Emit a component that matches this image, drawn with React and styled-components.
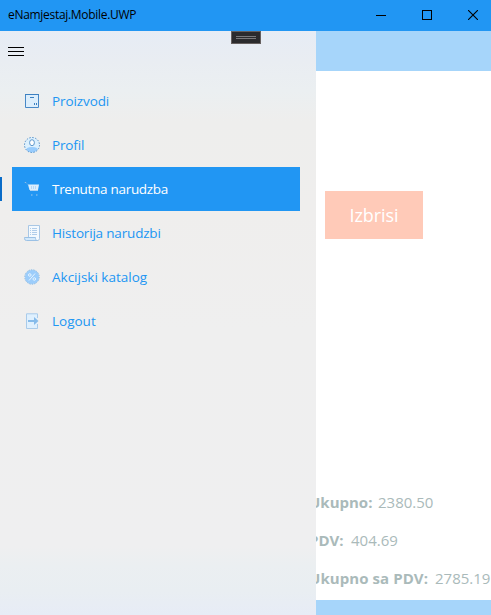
import React from "react";
import styled, { createGlobalStyle } from "styled-components";

const GlobalStyle = createGlobalStyle`
  * { box-sizing: border-box; }
  body { margin: 0; overflow: hidden; background: #fff; font-family: "Open Sans", "Noto Sans", sans-serif; }
`;

const Window = styled.div`
  width: 491px;
  height: 615px;
  display: flex;
  flex-direction: column;
  overflow: hidden;
  background: #fff;
`;

const TitleBar = styled.header`
  flex: 0 0 31px;
  display: flex;
  justify-content: space-between;
  padding-left: 8px;
  background: #2196f3;
  color: #000;
`;

const Title = styled.span`
  font-size: 12px;
  line-height: 29px;
  letter-spacing: -0.3px;
  white-space: nowrap;
`;

const WindowControls = styled.div`
  display: flex;
  margin-right: -5px;
`;

const ControlButton = styled.button`
  width: 46px;
  height: 30px;
  display: flex;
  align-items: center;
  justify-content: center;
  padding: 0;
  border: 0;
  background: transparent;
`;

const Stage = styled.div`
  position: relative;
  flex: 1;
  min-height: 0;
`;

const Page = styled.main`
  height: 100%;
  display: flex;
  flex-direction: column;
  padding-left: 308px;
`;

const Band = styled.div`
  flex: 0 0 ${(p) => p.$height}px;
  margin-left: -308px;
  background: #a6d5fa;
`;

const DeleteButton = styled.button`
  width: 98px;
  height: 48px;
  margin: 120px 0 0 17px;
  padding: 0;
  border: 0;
  background: #ffcab8;
  color: #fff;
  font: 18px/48px "Open Sans", sans-serif;
  letter-spacing: -0.1px;
`;

const Totals = styled.dl`
  margin: auto 0 3px;
  display: flex;
  flex-direction: column;
`;

const TotalRow = styled.div`
  display: flex;
  height: 38px;
  align-items: center;
  margin-left: 1px;
  color: #aababa;
  font-size: 15px;
  white-space: nowrap;
`;

const TotalLabel = styled.dt`
  width: ${(p) => p.$width}px;
  font-weight: 700;
  letter-spacing: ${(p) => p.$track}px;
`;

const TotalValue = styled.dd`
  margin: 0;
`;

const Drawer = styled.nav`
  position: absolute;
  inset: 0 auto 0 0;
  width: 316px;
  background: linear-gradient(180deg, #e6ecf5 0, #e9edf2 30px, #ebeff1 60px, #eeeeed 90px, #efeeed 180px, #efefef 300px, #efeff0 515px, #ebeff1 535px, #e9eef2 560px, #e7ecf6 584px);
`;

const MenuButton = styled.button`
  width: 40px;
  height: 40px;
  display: block;
  padding: 0 0 0 8px;
  border: 0;
  background: transparent;
  svg { display: block; }
`;

const MenuList = styled.ul`
  margin: 8px 0 0;
  padding: 0;
  list-style: none;
`;

const MenuItem = styled.li`
  display: flex;
  align-items: center;
  height: 44px;
  padding-right: 16px;
`;

const Marker = styled.span`
  width: 2px;
  height: 24px;
  margin-right: 10px;
  background: ${(p) => (p.$active ? "#0a6cc8" : "transparent")};
`;

const MenuLink = styled.a`
  flex: 1;
  height: 44px;
  display: flex;
  align-items: center;
  gap: 12px;
  padding-left: 12px;
  background: ${(p) => (p.$active ? "#2196f3" : "transparent")};
  color: ${(p) => (p.$active ? "#fff" : "#2196f3")};
  font-size: 13.5px;
  white-space: nowrap;
  svg { flex: none; }
`;

const MenuLabel = styled.span`
  letter-spacing: ${(p) => p.$track}px;
`;

const DebugHandle = styled.div`
  position: absolute;
  left: 231px;
  top: 0;
  width: 30px;
  height: 13px;
  display: flex;
  flex-direction: column;
  align-items: center;
  justify-content: center;
  gap: 1px;
  border: 1px solid #66605f;
  background: #2b2b2d;
`;

const HandleLine = styled.span`
  width: 20px;
  height: 1px;
  background: #79797b;
`;

const Icon = ({ children }) => (
  <svg width="16" height="16" viewBox="0 0 16 16" fill="none">{children}</svg>
);

const BoxIcon = () => (
  <Icon>
    <path d="M1.500 1.500h13v13h-13z" fill="#dceefc" stroke="#4788c7" />
    <path d="M1 1.500h14" stroke="#3c80c1" />
    <path d="M6 4.500h4M10.500 10v2M12.500 10v2" stroke="#3c80c1" />
  </Icon>
);

const ProfileIcon = () => (
  <Icon>
    <circle cx="8" cy="8" r="7.5" fill="#dcf0fe" />
    <path d="M2.400 12.800C2.200 10.800 4 10 8 10s5.800.8 5.600 2.800A7.500 7.500 0 0 1 8 15.500a7.500 7.500 0 0 1-5.600-2.700z" fill="#98ccfd" />
    <ellipse cx="8" cy="5.700" rx="2.400" ry="3" fill="#fff" stroke="#5d97cc" />
    <circle cx="8" cy="8" r="7.5" stroke="#5590c8" strokeDasharray="1.5 1.445" />
  </Icon>
);

const CartIcon = () => (
  <Icon>
    <path d="M.8 1.500h1.400" stroke="#90bde5" />
    <path d="M2.500 2.500l1.500 1" stroke="#55a7ec" />
    <path d="M4 3.500h11l-1 5.500H5.500z" fill="#dceefc" />
    <path d="M7.500 5v3M9.500 5v3M11.500 5v3" stroke="#b3d8f8" />
    <path d="M6 9.500h8" stroke="#a9d3f7" />
    <path d="M7 14h1.500M12 14h1.500" stroke="#a5cbec" />
  </Icon>
);

const HistoryIcon = () => (
  <Icon>
    <path d="M4.500.5h11v13a2 2 0 0 1-2 2h-9z" fill="#f3f9fe" stroke="#a9c7e5" />
    <path d="M.5 12.500h11v1c0 1 .6 2 2 2h-11a2 2 0 0 1-2-2z" fill="#d3e9fb" stroke="#9bc1e5" />
    <path d="M6 3.500h1M8 3.500h5M6 5.500h1M8 5.500h5M6 7.500h1M8 7.500h5M6 9.500h1M8 9.500h5" stroke="#b0cdea" />
  </Icon>
);

const DiscountIcon = () => (
  <Icon>
    <circle cx="8" cy="8" r="7" fill="#9ccdfb" />
    <circle cx="8" cy="8" r="7.200" stroke="#84b8e6" strokeDasharray="1.5 1" />
    <path d="M11 4.500l-6 7" stroke="#e6f4ff" />
    <circle cx="5.800" cy="6" r="1.300" stroke="#e6f4ff" />
    <circle cx="10.300" cy="10" r="1.300" stroke="#e6f4ff" />
  </Icon>
);

const LogoutIcon = () => (
  <Icon>
    <path d="M13.500 5V.8h-11v14.700h11V11" fill="#dff0fe" stroke="#a9cbea" />
    <path d="M4 7h6V4l4.500 4-4.500 4V9H4z" fill="#86bbea" />
  </Icon>
);

const menu = [
  { label: "Proizvodi", icon: BoxIcon, track: -0.1 },
  { label: "Profil", icon: ProfileIcon, track: -0.15 },
  { label: "Trenutna narudzba", icon: CartIcon, track: -0.3, active: true },
  { label: "Historija narudzbi", icon: HistoryIcon, track: -0.18 },
  { label: "Akcijski katalog", icon: DiscountIcon, track: 0 },
  { label: "Logout", icon: LogoutIcon, track: 0 },
];

const totals = [
  { label: "Ukupno:", value: "2380.50", width: 69, track: 0 },
  { label: "PDV:", value: "404.69", width: 42, track: 0 },
  { label: "Ukupno sa PDV:", value: "2785.19", width: 126, track: 0.07 },
];

export default function App() {
  return (
    <Window>
      <GlobalStyle />
      <TitleBar>
        <Title>eNamjestaj.Mobile.UWP</Title>
        <WindowControls>
          <ControlButton aria-label="Minimize">
            <svg width="10" height="10" shapeRendering="crispEdges"><path d="M0 5.500h10" stroke="#000" /></svg>
          </ControlButton>
          <ControlButton aria-label="Maximize">
            <svg width="10" height="10" shapeRendering="crispEdges"><path d="M.5.5h9v9h-9z" fill="none" stroke="#000" /></svg>
          </ControlButton>
          <ControlButton aria-label="Close">
            <svg width="10" height="10"><path d="M0 0l10 10M10 0L0 10" stroke="#000" strokeWidth="1.100" /></svg>
          </ControlButton>
        </WindowControls>
      </TitleBar>
      <Stage>
        <Page>
          <Band $height={40} />
          <DeleteButton>Izbrisi</DeleteButton>
          <Totals>
            {totals.map((t) => (
              <TotalRow key={t.label}>
                <TotalLabel $width={t.width} $track={t.track}>{t.label}</TotalLabel>
                <TotalValue>{t.value}</TotalValue>
              </TotalRow>
            ))}
          </Totals>
          <Band $height={15} />
        </Page>
        <Drawer>
          <MenuButton aria-label="Menu">
            <svg width="16" height="9" shapeRendering="crispEdges"><path d="M0 .5h16M0 4.500h16M0 8.500h16" stroke="#000" /></svg>
          </MenuButton>
          <MenuList>
            {menu.map(({ label, icon: ItemIcon, track, active }) => (
              <MenuItem key={label}>
                <Marker $active={active} />
                <MenuLink $active={active}>
                  <ItemIcon />
                  <MenuLabel $track={track}>{label}</MenuLabel>
                </MenuLink>
              </MenuItem>
            ))}
          </MenuList>
        </Drawer>
        <DebugHandle>
          <HandleLine />
          <HandleLine />
        </DebugHandle>
      </Stage>
    </Window>
  );
}
